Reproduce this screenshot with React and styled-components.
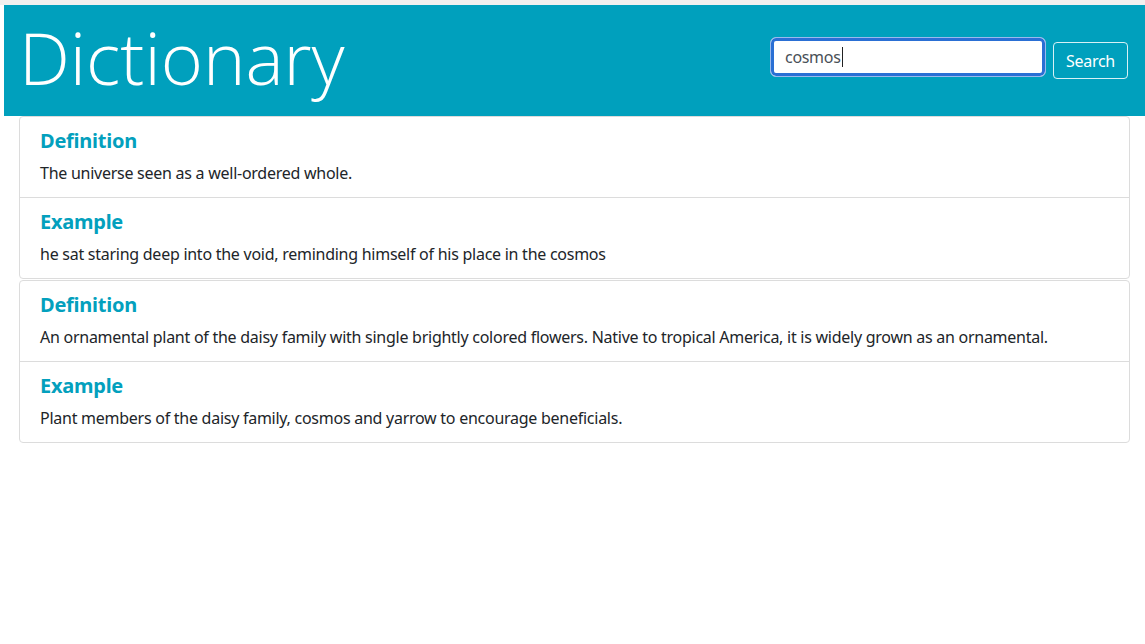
import React from "react";
import styled, { createGlobalStyle } from "styled-components";

const Global = createGlobalStyle`
  html, body { margin: 0; padding: 0; background: #fff; }
  body { font-family: "Noto Sans", "Open Sans", sans-serif; color: #212529; }
  * { box-sizing: border-box; }
`;

const TopBand = styled.div`
  height: 5px;
  background: #f1f0ef;
`;

const Page = styled.div`
  padding-left: 4px;
  width: 1145px;
`;

const Header = styled.header`
  height: 111px;
  background: #00a0bd;
  display: flex;
  align-items: flex-start;
  justify-content: space-between;
  padding: 0 17px 0 15px;
`;

const Title = styled.h1`
  margin: 9px 0 0;
  font-family: "Open Sans", "Noto Sans", sans-serif;
  font-weight: 300;
  font-size: 72px;
  line-height: 86px;
  color: #fff;
  letter-spacing: 0;
`;

const Form = styled.form`
  display: flex;
  align-items: flex-start;
  gap: 7px;
  margin-top: 32px;
`;

const Field = styled.div`
  width: 276px;
  height: 40px;
  border-radius: 6px;
  background: #fff;
  border: 1px solid #9ab9ec;
  box-shadow: 0 0 0 3px #2a6fd4 inset;
  display: flex;
  align-items: center;
  padding-left: 14px;
  font-size: 16px;
  color: #495057;
  font-family: "Noto Sans", sans-serif;
  letter-spacing: -0.3px;
`;

const Caret = styled.span`
  display: inline-block;
  width: 1px;
  height: 20px;
  background: #222;
  margin-left: 1px;
`;

const Button = styled.button`
  margin-top: 5px;
  width: 75px;
  height: 37px;
  border: 1px solid rgba(255, 255, 255, 0.85);
  border-radius: 4px;
  background: transparent;
  color: #fff;
  font-family: "Noto Sans", sans-serif;
  font-size: 16px;
  padding: 0;
  letter-spacing: -0.3px;
`;

const Results = styled.main`
  margin: 0 15px;
  display: flex;
  flex-direction: column;
  gap: 1px;
`;

const Card = styled.section`
  border: 1px solid #dcdcdc;
  border-radius: 4px;
  background: #fff;
`;

const Item = styled.div`
  padding: 12px 20px 12px 20px;
  & + & { border-top: 1px solid #dcdcdc; }
`;

const Heading = styled.h5`
  margin: 0 0 8px;
  font-size: 20px;
  line-height: 24px;
  font-weight: 700;
  color: #03a0bd;
  letter-spacing: -0.25px;
`;

const Text = styled.p`
  margin: 0;
  font-size: 16px;
  line-height: 24px;
  color: #212529;
  letter-spacing: -0.26px;
`;

const data = [
  {
    definition: "The universe seen as a well-ordered whole.",
    example:
      "he sat staring deep into the void, reminding himself of his place in the cosmos",
  },
  {
    definition:
      "An ornamental plant of the daisy family with single brightly colored flowers. Native to tropical America, it is widely grown as an ornamental.",
    example:
      "Plant members of the daisy family, cosmos and yarrow to encourage beneficials.",
  },
];

export default function App() {
  return (
    <>
      <Global />
      <TopBand />
      <Page>
        <Header>
          <Title>Dictionary</Title>
          <Form onSubmit={(e) => e.preventDefault()}>
            <Field>
              cosmos
              <Caret />
            </Field>
            <Button type="submit">Search</Button>
          </Form>
        </Header>
        <Results>
          {data.map((d, i) => (
            <Card key={i}>
              <Item>
                <Heading>Definition</Heading>
                <Text>{d.definition}</Text>
              </Item>
              <Item>
                <Heading>Example</Heading>
                <Text>{d.example}</Text>
              </Item>
            </Card>
          ))}
        </Results>
      </Page>
    </>
  );
}
